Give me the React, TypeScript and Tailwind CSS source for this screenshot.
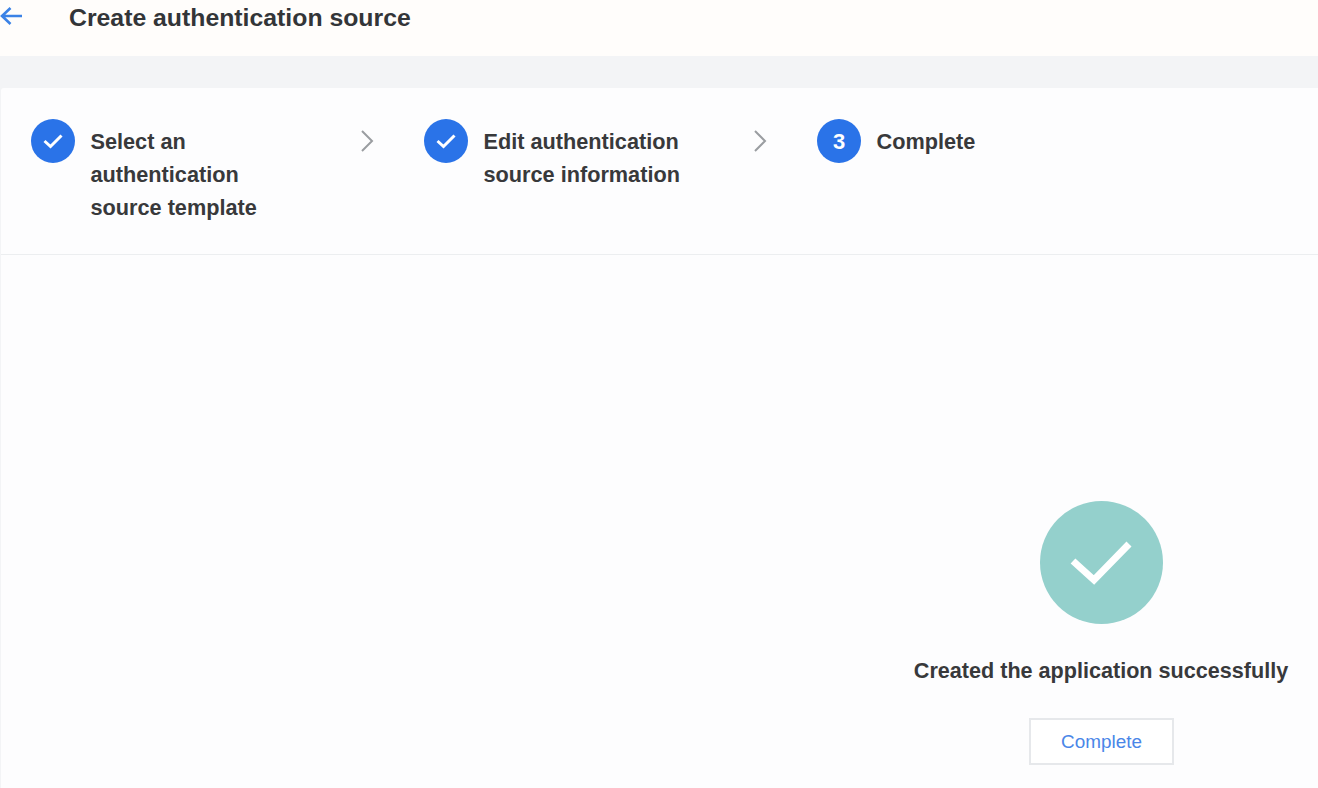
const font = "font-['Liberation_Sans',Arial,sans-serif]";

function CheckCircle() {
  return (
    <span className="flex h-[44px] w-[44px] shrink-0 items-center justify-center rounded-full bg-[#2a73e8]">
      <svg width="24" height="24" viewBox="0 0 24 24" fill="none" stroke="#ffffff" strokeWidth="3">
        <path d="M3.5 12 L9.5 17.5 L20.5 6.5" />
      </svg>
    </span>
  );
}

function Chevron() {
  return (
    <svg width="16" height="24" viewBox="0 0 16 24" fill="none" stroke="#9a9da1" strokeWidth="2" className="mt-[10px] shrink-0">
      <path d="M3 2 L13 12 L3 22" />
    </svg>
  );
}

function Step({ icon, lines, width }: { icon: React.ReactNode; lines: string[]; width: string }) {
  return (
    <div className={`flex shrink-0 items-start gap-[15.5px] ${width}`}>
      {icon}
      <div className="pt-[6px] text-[21.7px] font-bold leading-[33px] text-[#38393b]">
        {lines.map((l) => (
          <div key={l} className="whitespace-nowrap">{l}</div>
        ))}
      </div>
    </div>
  );
}

export default function App() {
  return (
    <div className={`flex h-[788px] w-[1318px] flex-col overflow-hidden bg-[#f3f4f6] ${font}`}>
      <header className="flex h-[56px] shrink-0 items-start bg-[#fffdfb] pt-[3px]">
        <svg width="24" height="24" viewBox="0 0 24 24" fill="none" stroke="#3b82e6" strokeWidth="2.6" className="shrink-0">
          <path d="M22 13 H2 M10.5 5 L2 13 L10.5 21" />
        </svg>
        <h1 className="ml-[45px] text-[24.8px] font-bold leading-[29px] text-[#333538]">Create authentication source</h1>
      </header>
      <div className="h-[32px] shrink-0 bg-[#f3f4f6]" />
      <main className="ml-px flex min-h-0 flex-1 flex-col rounded-tl-[3px] bg-[#fdfdfe]">
        <div className="flex h-[167px] shrink-0 items-start border-b border-[#eceef0] pl-[30px] pt-[31px]">
          <Step icon={<CheckCircle />} lines={["Select an", "authentication", "source template"]} width="w-[328px]" />
          <Chevron />
          <div className="w-[49px] shrink-0" />
          <Step icon={<CheckCircle />} lines={["Edit authentication", "source information"]} width="w-[328px]" />
          <Chevron />
          <div className="w-[49px] shrink-0" />
          <Step
            icon={
              <span className="flex h-[44px] w-[44px] shrink-0 items-center justify-center rounded-full bg-[#2a73e8] text-[22px] font-bold text-white">
                3
              </span>
            }
            lines={["Complete"]}
            width="w-[200px]"
          />
        </div>
        <div className="flex flex-1 justify-end pr-[29px] pt-[246px]">
          <div className="flex w-[376px] flex-col items-center">
            <span className="flex h-[123px] w-[123px] items-center justify-center rounded-full bg-[#94d0cc]">
              <svg width="64" height="48" viewBox="0 0 64 48" fill="none" stroke="#ffffff" strokeWidth="7">
                <path d="M4 22 L25 41 L60 5" />
              </svg>
            </span>
            <p className="mt-[33px] whitespace-nowrap text-[21.6px] font-bold leading-[28px] text-[#38393b]">
              Created the application successfully
            </p>
            <button className="mt-[33px] ml-px h-[47px] w-[145px] border-2 border-[#e6e8eb] bg-white pt-px text-[18.9px] text-[#4a86e8]">
              Complete
            </button>
          </div>
        </div>
      </main>
    </div>
  );
}
